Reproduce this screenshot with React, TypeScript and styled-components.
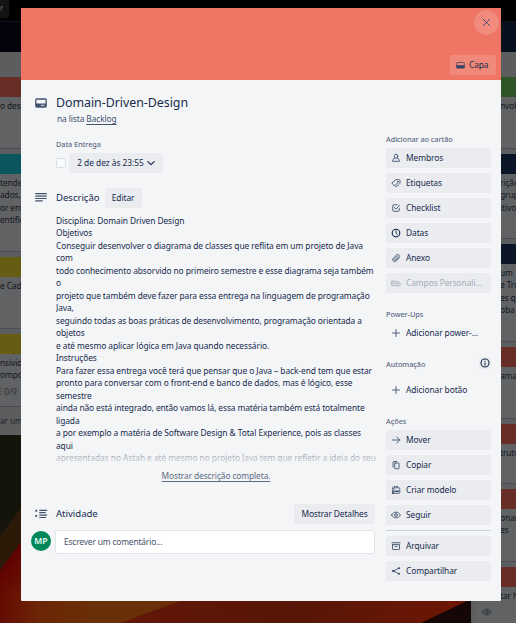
import React from "react";
import styled, { createGlobalStyle } from "styled-components";

const GlobalStyle = createGlobalStyle`
  * { box-sizing: border-box; }
  html, body { margin: 0; padding: 0; overflow: hidden; background: #15140a; }
  body { font-family: "Noto Sans", "Liberation Sans", sans-serif; font-size: 8.4px; letter-spacing: -0.11px; color: #172b4d; }
`;

/* ---------- board behind the dialog ---------- */

const Screen = styled.div`
  position: relative;
  width: 516px;
  height: 623px;
  overflow: hidden;
`;

const Wallpaper = styled.svg`
  position: absolute;
  inset: 0;
`;

const Board = styled.div`
  position: relative;
  display: flex;
  flex-direction: column;
  height: 623px;
`;

const BrowserBar = styled.div`
  height: 21px;
  background: #000001;
  border-bottom: 1px solid #000;
`;

const BrowserTab = styled.div`
  width: 9px;
  height: 18px;
  padding-top: 2px;
  background: #141414;
  color: #6a6a6a;
  border-radius: 0 0 2px 0;
  font-size: 8px;
  line-height: 12px;
`;

const BoardHeader = styled.div`
  height: 31px;
  flex: none;
  border-top: 1px solid #141416;
  background: linear-gradient(90deg, #02010c, #06111d);
`;

const Lists = styled.div`
  display: flex;
  justify-content: space-between;
  align-items: flex-start;
  flex: 1;
`;

const List = styled.div<{ $width: number; $height: number; $side: "left" | "right" }>`
  display: flex;
  flex-direction: column;
  width: ${(p) => p.$width}px;
  height: ${(p) => p.$height}px;
  padding-top: 25px;
  padding-left: ${(p) => (p.$side === "right" ? 5 : 0)}px;
  background: #5c5d5e;
`;

const BoardCard = styled.div<{ $height: number }>`
  flex: none;
  height: ${(p) => p.$height}px;
  margin-bottom: 5px;
  background: #616263;
  border-bottom: 1px solid #4a4c50;
`;

const CardCover = styled.div<{ $color: string }>`
  height: 20px;
  margin-bottom: 3px;
  background: ${(p) => p.$color};
`;

const CardLine = styled.div<{ $side: "left" | "right"; $dim?: boolean; $gap?: number }>`
  height: 12.4px;
  margin-top: ${(p) => p.$gap ?? 0}px;
  padding-left: ${(p) => (p.$side === "right" ? 24 : 0)}px;
  line-height: 12.4px;
  white-space: nowrap;
  color: ${(p) => (p.$dim ? "#303338" : "#11161f")};
`;

const ListFooter = styled.div`
  padding-top: 2px;
  line-height: 13px;
  white-space: nowrap;
  color: #24272c;
`;

const WatchMark = styled.div`
  padding: 5px 0 0 6px;
  color: #2a2f38;
`;

/* ---------- dialog ---------- */

const Dialog = styled.section`
  position: absolute;
  left: 21px;
  top: 8px;
  width: 480px;
  height: 593px;
  display: flex;
  flex-direction: column;
  background: #f4f5f7;
  border-radius: 1px;
`;

const Cover = styled.header`
  height: 72px;
  flex: none;
  padding: 2px 2px 5px 0;
  display: flex;
  flex-direction: column;
  justify-content: space-between;
  align-items: flex-end;
  background: #ef7564;
  border-radius: 1px 1px 0 0;
`;

const CloseButton = styled.button`
  width: 25px;
  height: 25px;
  border: 0;
  padding: 0;
  border-radius: 50%;
  display: grid;
  place-items: center;
  background: #f28b7d;
  color: #42526e;
`;

const CoverButton = styled.button`
  width: 46px;
  height: 20px;
  margin-right: 3px;
  padding: 0 0 1px 6px;
  border: 0;
  border-radius: 2px;
  display: flex;
  align-items: center;
  gap: 4px;
  background: #f1897b;
  color: #172b4d;
  font: inherit;
  letter-spacing: inherit;
`;

const Columns = styled.div`
  display: flex;
  flex: 1;
`;

const Main = styled.main`
  width: 365px;
  padding: 13px 0 0 10px;
  display: flex;
  flex-direction: column;
`;

const SectionHead = styled.div<{ $top?: number }>`
  display: grid;
  grid-template-columns: 25px auto 1fr;
  align-items: center;
  height: 20px;
  margin-top: ${(p) => p.$top ?? 0}px;
  padding-right: 11px;
`;

const HeadIcon = styled.span`
  display: flex;
  padding-left: 4px;
  color: #42526e;
`;

const Title = styled.h1`
  margin: 0;
  font-size: 12.4px;
  font-weight: 400;
  letter-spacing: -0.03px;
  line-height: 20px;
`;

const SectionTitle = styled.h2`
  margin: 0;
  font-size: 9.6px;
  font-weight: 450;
  letter-spacing: -0.03px;
  line-height: 20px;
`;

const Body = styled.div`
  padding-left: 25px;
`;

const ListName = styled.p`
  margin: 0 0 0 1px;
  height: 12px;
  line-height: 12px;
  color: #42526e;
  a { text-decoration: underline; text-underline-offset: 1.5px; }
`;

const Label = styled.h3`
  margin: 0;
  font-size: 7.3px;
  font-weight: 500;
  letter-spacing: -0.06px;
  line-height: 10px;
  color: #5e6c84;
`;

const DueLabel = styled(Label)`
  margin-top: 14px;
`;

const DueRow = styled.div`
  display: flex;
  align-items: center;
  gap: 3px;
  margin-top: 4px;
`;

const Checkbox = styled.span`
  width: 10px;
  height: 10px;
  border: 1px solid #dcdfe4;
  border-radius: 1px;
  background: #fafbfc;
`;

const SoftButton = styled.button<{ $width: number }>`
  width: ${(p) => p.$width}px;
  height: 20px;
  padding: 0 0 1px;
  border: 0;
  border-radius: 2px;
  display: flex;
  align-items: center;
  justify-content: center;
  gap: 3px;
  background: #eaecf0;
  color: #172b4d;
  font: inherit;
  letter-spacing: inherit;
  white-space: nowrap;
`;

const DueButton = styled(SoftButton)`
  letter-spacing: -0.03px;
  svg { margin-top: 1px; }
`;

const EditSlot = styled.div`
  padding-left: 5px;
`;

const DetailSlot = styled.div`
  display: flex;
  justify-content: flex-end;
`;

const Description = styled.div`
  position: relative;
  height: 250px;
  margin-top: 6.6px;
  overflow: hidden;
  &::after {
    content: "";
    position: absolute;
    inset: 236px 0 0 0;
    background: linear-gradient(rgba(244, 245, 247, 0.5), rgba(244, 245, 247, 0.88));
  }
`;

const TextLine = styled.div<{ $tracking: number }>`
  height: 12.5px;
  line-height: 12.5px;
  white-space: nowrap;
  letter-spacing: ${(p) => p.$tracking}px;
`;

const ShowMore = styled.a`
  display: block;
  width: 320px;
  margin-top: 5.4px;
  line-height: 12px;
  text-align: center;
  text-decoration: underline;
  text-underline-offset: 1.5px;
  color: #5e6c84;
`;

const CommentRow = styled.div`
  display: flex;
  align-items: center;
  gap: 4px;
  margin-top: 6px;
  height: 24px;
`;

const Avatar = styled.span`
  width: 20px;
  height: 20px;
  margin-top: -2px;
  border-radius: 50%;
  display: grid;
  place-items: center;
  background: #00875a;
  color: #e9fff6;
  font-size: 8.6px;
  font-weight: 600;
  letter-spacing: 0;
`;

const CommentBox = styled.div`
  width: 320px;
  height: 24px;
  padding-left: 8px;
  line-height: 22px;
  border: 1px solid #e3e5ea;
  border-radius: 2px;
  background: #fff;
  color: #44526c;
  letter-spacing: -0.16px;
`;

const Sidebar = styled.aside`
  width: 105px;
  padding-top: 54px;
  display: flex;
  flex-direction: column;
`;

const Group = styled.div<{ $height: number }>`
  height: ${(p) => p.$height}px;
  flex: none;
`;

const GroupHead = styled.div<{ $gap: number }>`
  display: flex;
  align-items: center;
  justify-content: space-between;
  height: 10px;
  margin-bottom: ${(p) => p.$gap}px;
`;

const InfoButton = styled.span`
  width: 12px;
  height: 12px;
  margin-top: -2px;
  display: grid;
  place-items: center;
  background: #eaecf0;
  border-radius: 2px;
`;

const SideButton = styled.button<{ $plain?: boolean; $disabled?: boolean }>`
  width: 105px;
  height: 20px;
  margin: 0 0 5px;
  padding: 0 0 1px 5px;
  border: 0;
  border-radius: 2px;
  display: flex;
  align-items: center;
  gap: 5px;
  background: ${(p) => (p.$plain ? "transparent" : "#eaecf0")};
  color: ${(p) => (p.$disabled ? "#a5adba" : "#172b4d")};
  font: inherit;
  letter-spacing: -0.08px;
  white-space: nowrap;
  svg { color: ${(p) => (p.$disabled ? "#a5adba" : "#42526e")}; }
`;

const Divider = styled.hr`
  width: 105px;
  height: 1px;
  margin: 0 0 5px;
  border: 0;
  background: #cdd1d9;
`;

/* ---------- icons ---------- */

const Svg = styled.svg`
  display: block;
  flex: none;
  fill: none;
  stroke: currentColor;
  stroke-linecap: round;
  stroke-linejoin: round;
`;

const glyphs: Record<string, React.ReactNode> = {
  member: (
    <>
      <ellipse cx="10" cy="6.5" rx="3.6" ry="4" />
      <path d="M7.6 10.2C4.6 11.4 3 13.4 3 16.6h14c0-3.2-1.6-5.2-4.6-6.4" />
    </>
  ),
  label: (
    <>
      <path d="M2.500 9.500 9 3.800c.6-.5 1.200-.8 2.200-.8h3.800c2 0 3 1 3 3v3c0 1.200-.3 2-1.200 2.900l-5 4.800c-.9.8-1.700.8-2.600 0L7 14.500" />
      <path d="M2.500 9.500c-.6.600-.6 1.400 0 2l3.500 3.200c.7.6 1.300.6 2 0l5.500-5.200" />
      <circle cx="13.800" cy="7.300" r="1" />
    </>
  ),
  check: (
    <>
      <path d="M16.500 10.500v4.200c0 1.200-.6 1.800-1.800 1.800H5.300c-1.200 0-1.800-.6-1.800-1.800V5.300c0-1.200.6-1.800 1.800-1.800h7" />
      <path d="m7 9 3 3.200 7-7.500" />
    </>
  ),
  clock: (
    <>
      <circle cx="10" cy="10" r="7.600" stroke="#172b4d" strokeWidth="2.300" />
      <path d="M10 5.500V10l2.600 2.800" stroke="#172b4d" />
    </>
  ),
  clip: (
    <path d="m16.800 9.500-6.500 6.300c-2 1.900-4.600 1.700-6.100.1-1.500-1.700-1.400-4 .4-5.700l6.700-6.300c1.400-1.300 3.300-1.200 4.400 0 1.100 1.200 1 2.900-.3 4.200l-6 5.700c-.9.8-1.900.7-2.500.1-.6-.700-.6-1.600.3-2.400l5.300-5" />
  ),
  fields: (
    <path d="M1.500 6.500V14c0 .8.400 1.200 1.200 1.200h14.600c.8 0 1.200-.4 1.200-1.200v-2.300c0-.8-.4-1.200-1.200-1.200H1.500M1.500 7.500c0-.9.500-1.400 1.400-1.400h5.200l1.500 1.600h6" />
  ),
  plus: <path d="M10 3v14M3 10h14" />,
  arrow: <path d="M2.500 10h15M11.500 4l6 6-6 6" />,
  copy: (
    <>
      <path d="M4 14.500V4.500c0-.9.600-1.500 1.500-1.500h6" />
      <rect x="7.500" y="6" width="8.500" height="11.500" rx="1" />
    </>
  ),
  template: (
    <>
      <path d="M3 13V4.500M5.500 2.800H14" strokeDasharray="2.600 2.600" />
      <rect x="5.500" y="5.500" width="12" height="11" rx="1.500" />
      <path d="M8 12.500h7M3 14.500v2.200h2.500" strokeWidth="2.600" />
    </>
  ),
  eye: (
    <>
      <path d="M1.200 10C3 6.500 6.200 4.300 10 4.300s7 2.200 8.800 5.700c-1.800 3.500-5 5.700-8.800 5.700S3 13.500 1.200 10Z" />
      <circle cx="10" cy="10" r="2.900" />
    </>
  ),
  archive: (
    <path d="M2 3.500h16M3 7.200h14v8.600c0 .8-.4 1.200-1.200 1.200H4.200c-.8 0-1.200-.4-1.200-1.200V7.200ZM8 10.800h4" />
  ),
  share: (
    <>
      <path d="m5 10 10-5.200M5 10l10 5.200" />
      <circle cx="4" cy="10" r="1.600" fill="currentColor" />
      <circle cx="15.800" cy="4.500" r="1.300" fill="currentColor" />
      <circle cx="15.800" cy="15.500" r="1.300" fill="currentColor" />
    </>
  ),
  info: (
    <>
      <circle cx="10" cy="10" r="8" />
      <path d="M10 9.500v4.500M10 6v.3" />
    </>
  ),
  close: <path d="m3 3 14 14M17 3 3 17" />,
  chevron: <path d="m2 6.500 8 7.500 8-7.500" />,
};

const Icon = ({ name, size = 10, weight = 1.8 }: { name: string; size?: number; weight?: number }) => (
  <Svg width={size} height={size} viewBox="0 0 20 20" strokeWidth={weight}>
    {glyphs[name]}
  </Svg>
);

const CoverGlyph = () => (
  <Svg width="12" height="10" viewBox="0 0 12 10" strokeWidth="1.300">
    <rect x=".8" y="1" width="10.400" height="8" rx="1" />
    <path d="M1 5.500h10v3.300H1z" fill="currentColor" stroke="none" />
    <path d="M6.300 7.300h2.700" stroke="#f4f5f7" strokeWidth=".9" />
  </Svg>
);

const CapaGlyph = () => (
  <Svg width="9" height="8" viewBox="0 0 9 8" strokeWidth="1">
    <rect x=".7" y="1.500" width="7.600" height="5.500" rx=".6" stroke="#6d5569" />
    <path d="M.5 4.200h8v3h-8z" fill="#344563" stroke="none" />
  </Svg>
);

const LinesGlyph = () => (
  <Svg width="12" height="10" viewBox="0 0 12 10" strokeWidth="1.200">
    <path d="M.7.700h10.600M.7 3.100h10.600M.7 5.500h10.600M.7 7.900h6.600" />
  </Svg>
);

const ActivityGlyph = () => (
  <Svg width="13" height="10" viewBox="0 0 13 10" strokeWidth="1.200">
    <path d="M4.700 1.300h7M4.700 3.700h5.500M4.700 6.100h7M4.700 8.500h6" />
    <path d="M1 1.700h.4M1 7h.4" strokeWidth="1.900" />
  </Svg>
);

/* ---------- data ---------- */

const description: [string, number][] = [
  ["Disciplina: Domain Driven Design", -0.08],
  ["Objetivos", -0.1],
  ["Conseguir desenvolver o diagrama de classes que reflita em um projeto de Java", -0.067],
  ["com", -0.1],
  ["todo conhecimento absorvido no primeiro semestre e esse diagrama seja também", -0.09],
  ["o", -0.1],
  ["projeto que também deve fazer para essa entrega na linguagem de programação", -0.086],
  ["Java,", -0.1],
  ["seguindo todas as boas práticas de desenvolvimento, programação orientada a", -0.085],
  ["objetos", -0.07],
  ["e até mesmo aplicar lógica em Java quando necessário.", -0.07],
  ["Instruções", -0.07],
  ["Para fazer essa entrega você terá que pensar que o Java – back-end tem que estar", -0.066],
  ["pronto para conversar com o front-end e banco de dados, mas é lógico, esse", -0.055],
  ["semestre", -0.08],
  ["ainda não está integrado, então vamos lá, essa matéria também está totalmente", -0.107],
  ["ligada", -0.08],
  ["a por exemplo a matéria de Software Design & Total Experience, pois as classes", -0.079],
  ["aqui", -0.08],
  ["apresentadas no Astah e até mesmo no projeto Java tem que refletir a ideia do seu", -0.058],
];

const addActions: [string, string][] = [
  ["member", "Membros"],
  ["label", "Etiquetas"],
  ["check", "Checklist"],
  ["clock", "Datas"],
  ["clip", "Anexo"],
];

const cardActions: [string, string][] = [
  ["arrow", "Mover"],
  ["copy", "Copiar"],
  ["template", "Criar modelo"],
  ["eye", "Seguir"],
];

type CardData = { color: string; height: number; lines: string[]; badge?: string; watched?: boolean };

const RED = "#672e27";
const NAVY = "#0a1625";
const OLIVE = "#655d12";

const leftCards: CardData[] = [
  { color: RED, height: 72, lines: ["o desc"] },
  { color: "#0b5560", height: 98, lines: ["tende", "ados,", "or ent", "entific"] },
  { color: OLIVE, height: 72, lines: ["e Cad"] },
  { color: OLIVE, height: 73, lines: ["nsivid", "ompo"], badge: "⁝ 0/9" },
];

const rightCards: CardData[] = [
  { color: "#2f5426", height: 72, lines: ["nvol"] },
  { color: NAVY, height: 85, lines: ["rição", "grup", "itivo"] },
  { color: NAVY, height: 98, lines: ["um", "e Tru", "es q", "oba"] },
  { color: RED, height: 72, lines: ["ama"] },
  { color: RED, height: 60, lines: ["truto"] },
  { color: RED, height: 73, lines: ["onar", "es"] },
  { color: RED, height: 60, lines: ["tar h"], watched: true },
];

const BoardCards = ({ cards, side }: { cards: CardData[]; side: "left" | "right" }) => (
  <>
    {cards.map((card, i) => (
      <BoardCard key={i} $height={card.height}>
        <CardCover $color={card.color} />
        {card.lines.map((line) => (
          <CardLine key={line} $side={side}>{line}</CardLine>
        ))}
        {card.badge && <CardLine $side={side} $dim $gap={4}>{card.badge}</CardLine>}
        {card.watched && <WatchMark><Icon name="eye" /></WatchMark>}
      </BoardCard>
    ))}
  </>
);

export default function App() {
  return (
    <Screen>
      <GlobalStyle />
      <Wallpaper width="516" height="623" viewBox="0 0 516 623">
        <defs>
          <linearGradient id="flame" x1="0" y1="0" x2="1" y2="0">
            <stop offset="0" stopColor="#650b02" />
            <stop offset=".2" stopColor="#6c2505" />
            <stop offset=".5" stopColor="#693007" />
          </linearGradient>
          <linearGradient id="ember" x1="0" y1="0" x2="1" y2="0">
            <stop offset="0" stopColor="#631607" />
            <stop offset=".5" stopColor="#571607" />
            <stop offset="1" stopColor="#701603" />
          </linearGradient>
          <linearGradient id="glow" x1="0" y1="0" x2=".3" y2="1">
            <stop offset="0" stopColor="#3a0703" />
            <stop offset=".35" stopColor="#600301" />
            <stop offset="1" stopColor="#6b1a03" />
          </linearGradient>
        </defs>
        <path d="M0 430h516v193H0z" fill="#15140a" />
        <path d="M0 536 21 508v34L0 570z" fill="#2c1a09" />
        <path d="M0 570 21 542v81H0z" fill="url(#glow)" />
        <path d="M0 601h190l-67 22H0z" fill="url(#flame)" />
        <path d="M180 601h290l-48 22H120z" fill="url(#ember)" />
        <path d="M467 601h10v22h-56z" fill="#150705" />
      </Wallpaper>

      <Board>
        <BrowserBar>
          <BrowserTab>r</BrowserTab>
        </BrowserBar>
        <BoardHeader />
        <Lists>
          <List $width={200} $height={383} $side="left">
            <BoardCards cards={leftCards} side="left" />
            <ListFooter>ar um</ListFooter>
          </List>
          <List $width={45} $height={571} $side="right">
            <BoardCards cards={rightCards} side="right" />
          </List>
        </Lists>
      </Board>

      <Dialog>
        <Cover>
          <CloseButton><Icon name="close" size={9} weight={2.2} /></CloseButton>
          <CoverButton><CapaGlyph />Capa</CoverButton>
        </Cover>
        <Columns>
          <Main>
            <SectionHead>
              <HeadIcon><CoverGlyph /></HeadIcon>
              <Title>Domain-Driven-Design</Title>
            </SectionHead>
            <Body>
              <ListName>na lista <a>Backlog</a></ListName>
              <DueLabel>Data Entrega</DueLabel>
              <DueRow>
                <Checkbox />
                <DueButton $width={94}>2 de dez às 23:55 <Icon name="chevron" size={8} weight={3} /></DueButton>
              </DueRow>
            </Body>
            <SectionHead $top={15}>
              <HeadIcon><LinesGlyph /></HeadIcon>
              <SectionTitle>Descrição</SectionTitle>
              <EditSlot><SoftButton $width={37}>Editar</SoftButton></EditSlot>
            </SectionHead>
            <Body>
              <Description>
                {description.map(([text, tracking]) => (
                  <TextLine key={text} $tracking={tracking}>{text}</TextLine>
                ))}
              </Description>
              <ShowMore>Mostrar descrição completa.</ShowMore>
            </Body>
            <SectionHead $top={22}>
              <HeadIcon><ActivityGlyph /></HeadIcon>
              <SectionTitle>Atividade</SectionTitle>
              <DetailSlot><SoftButton $width={81}>Mostrar Detalhes</SoftButton></DetailSlot>
            </SectionHead>
            <CommentRow>
              <Avatar>MP</Avatar>
              <CommentBox>Escrever um comentário...</CommentBox>
            </CommentRow>
          </Main>

          <Sidebar>
            <Group $height={175}>
              <GroupHead $gap={4}><Label>Adicionar ao cartão</Label></GroupHead>
              {addActions.map(([icon, text]) => (
                <SideButton key={text}><Icon name={icon} />{text}</SideButton>
              ))}
              <SideButton $disabled><Icon name="fields" />Campos Personali...</SideButton>
            </Group>
            <Group $height={50}>
              <GroupHead $gap={4}><Label>Power-Ups</Label></GroupHead>
              <SideButton $plain><Icon name="plus" />Adicionar power-...</SideButton>
            </Group>
            <Group $height={57}>
              <GroupHead $gap={11}>
                <Label>Automação</Label>
                <InfoButton><Icon name="info" size={10} weight={2.2} /></InfoButton>
              </GroupHead>
              <SideButton $plain><Icon name="plus" />Adicionar botão</SideButton>
            </Group>
            <Group $height={114}>
              <GroupHead $gap={4}><Label>Ações</Label></GroupHead>
              {cardActions.map(([icon, text]) => (
                <SideButton key={text}><Icon name={icon} />{text}</SideButton>
              ))}
            </Group>
            <Divider />
            <SideButton><Icon name="archive" />Arquivar</SideButton>
            <SideButton><Icon name="share" />Compartilhar</SideButton>
          </Sidebar>
        </Columns>
      </Dialog>
    </Screen>
  );
}
